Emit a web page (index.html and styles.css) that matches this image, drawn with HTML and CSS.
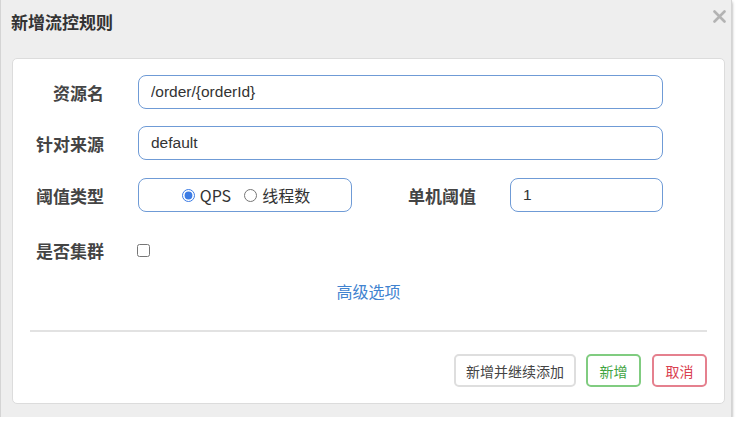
FILE: index.html
```html
<!DOCTYPE html>
<html lang="zh-CN">
<head>
  <meta charset="UTF-8" />
  <meta name="viewport" content="width=device-width, initial-scale=1.0"/>
  <title>新增流控规则</title>
  <link rel="stylesheet" href="styles.css">
</head>
<body>
  <div class="modal">
    <div class="modal-header">
      <h3>新增流控规则</h3>
      <span class="close">
        <svg width="13" height="13" viewBox="0 0 13 13"><path d="M1.5 1.5 L11.5 11.5 M11.5 1.5 L1.5 11.5" stroke="#b3b3b3" stroke-width="2.6" stroke-linecap="round"/></svg>
      </span>
    </div>

    <div class="card">
      <div class="form">
        <div class="row">
          <label>资源名</label>
          <input type="text" class="field" value="/order/{orderId}" />
        </div>
        <div class="row">
          <label>针对来源</label>
          <input type="text" class="field" value="default" />
        </div>
        <div class="row row-type">
          <label>阈值类型</label>
          <div class="radio-box">
            <label class="opt"><input type="radio" name="grade" checked /> QPS</label>
            <label class="opt"><input type="radio" name="grade" /> 线程数</label>
          </div>
          <label class="label-count">单机阈值</label>
          <input type="text" class="field" value="1" />
        </div>
        <div class="row row-cluster">
          <label>是否集群</label>
          <input type="checkbox" class="check" />
        </div>
      </div>

      <div class="advanced"><a href="#">高级选项</a></div>

      <div class="divider"></div>

      <div class="footer">
        <button class="btn">新增并继续添加</button>
        <button class="btn btn-ok">新增</button>
        <button class="btn btn-cancel">取消</button>
      </div>
    </div>
  </div>
</body>
</html>
```

FILE: styles.css
```css
body {
  margin: 0;
  background-color: #fff;
  font-family: "Noto Sans CJK SC", "Liberation Sans", sans-serif;
}

.modal {
  position: relative;
  width: 732px;
  height: 417px;
  box-sizing: border-box;
  background-color: #eeeeee;
  border-left: 1px solid #d4d4d4;
  border-right: 1px solid #d4d4d4;
  box-shadow: 0 2px 3px rgba(0,0,0,0.4);
}

.modal-header {
  height: 58px;
  box-sizing: border-box;
  padding: 9px 10px;
}

.modal-header h3 {
  margin: 0;
  font-size: 17px;
  line-height: 26px;
  font-weight: bold;
  color: #333;
}

.close {
  position: absolute;
  top: 4px;
  right: 5px;
}

.card {
  margin: 0 6px 0 11px;
  height: 346px;
  box-sizing: border-box;
  background-color: #fff;
  border: 1px solid #dcdcdc;
  border-radius: 5px;
}

.form {
  padding: 16px 61px 0 23px;
}

.row {
  display: flex;
  align-items: center;
  height: 34px;
  margin-bottom: 17px;
}

.row-type {
  margin-top: 18px;
}

.row-cluster {
  margin-top: 21px;
  margin-bottom: 0;
}

.row > label {
  flex: none;
  width: 68px;
  margin-right: 34px;
  text-align: right;
  font-size: 17px;
  font-weight: bold;
  color: #444;
  white-space: nowrap;
}

.field {
  flex: 1;
  min-width: 0;
  height: 34px;
  box-sizing: border-box;
  padding: 0 12px;
  border: 1px solid #6f9bd6;
  border-radius: 8px;
  font-family: "Liberation Sans", Arial, sans-serif;
  font-size: 15.5px;
  color: #333;
  outline: none;
}

.radio-box {
  flex: none;
  width: 214px;
  height: 34px;
  box-sizing: border-box;
  display: flex;
  align-items: center;
  justify-content: center;
  gap: 13px;
  padding-left: 2px;
  border: 1px solid #6f9bd6;
  border-radius: 8px;
}

.opt {
  display: flex;
  align-items: center;
  font-size: 16px;
  color: #333;
}

.opt input {
  margin: 0 5px 0 0;
  width: 13px;
  height: 13px;
  accent-color: #3b7be4;
}

.row > .label-count {
  width: 124px;
}

.check {
  width: 13px;
  height: 13px;
  margin: 0 0 0 -1px;
}

.advanced {
  margin-top: 12px;
  text-align: center;
  line-height: 24px;
}

.advanced a {
  font-size: 16px;
  color: #4183d0;
  text-decoration: none;
}

.divider {
  margin: 27px 17px 0 17px;
  height: 2px;
  background-color: #e2e2e2;
}

.footer {
  display: flex;
  justify-content: flex-end;
  gap: 10px;
  padding: 22px 17px 0 0;
}

.btn {
  height: 33px;
  padding: 0 10px;
  box-sizing: border-box;
  background-color: #fff;
  border: 2px solid #dedede;
  border-radius: 5px;
  font-family: "Noto Sans CJK SC", sans-serif;
  font-size: 14px;
  color: #444;
}

.btn-ok {
  padding: 0 11.5px;
  border-color: #80cc80;
  color: #3fa43f;
}

.btn-cancel {
  padding: 0 11.5px;
  margin-left: 1px;
  border-color: #e5808e;
  color: #d9404f;
}
```
